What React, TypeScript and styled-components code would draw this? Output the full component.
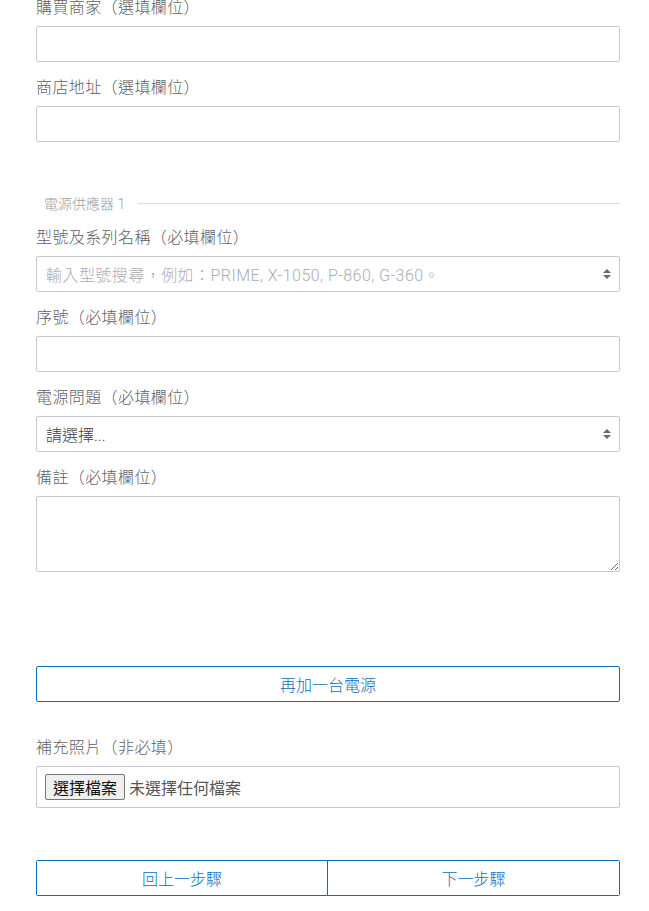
import React from 'react';
import styled, {createGlobalStyle} from 'styled-components';

const Global = createGlobalStyle`
  html, body { margin: 0; padding: 0; background: #fff; }
  body {
    font-family: Roboto, "Noto Sans CJK TC", "Noto Sans CJK SC", sans-serif;
    color: #555;
  }
  * { box-sizing: border-box; }
`

const Page = styled.div`
  width: 649px;
  height: 911px;
  overflow: hidden;
  padding: 0 29px 0 36px;
`
const Form = styled.form`
  display: flex;
  flex-direction: column;
  margin-top: -2px;
`
const Group = styled.div<{$gap?: number}>`
  display: flex;
  flex-direction: column;
  margin-bottom: ${p => p.$gap ?? 16}px;
`
const Label = styled.label`
  font-size: 16px;
  line-height: 20px;
  color: #5f6166;
  margin-bottom: 8px;
  font-weight: 300;
  letter-spacing: 0.4px;
`
const Field = styled.input`
  width: 584px;
  height: 36px;
  border: 1px solid #c7cad5;
  border-radius: 2px;
  padding: 0 9px;
  font: inherit;
  font-size: 16px;
  color: #333;
  background: #fff;
  outline: none;
`
const Area = styled.textarea`
  width: 584px;
  height: 76px;
  border: 1px solid #c7cad5;
  border-radius: 2px;
  padding: 6px 9px;
  font: inherit;
  font-size: 16px;
  background: #fff;
  outline: none;
  display: block;
`
const SelectBox = styled.div<{$muted?: boolean}>`
  position: relative;
  width: 584px;
  height: 36px;
  border: 1px solid #c7cad5;
  border-radius: 2px;
  padding: 0 9px;
  display: flex;
  align-items: center;
  font-size: 16px;
  font-weight: 300;
  color: ${p => (p.$muted ? '#a9acb5' : '#3e4046')};
  letter-spacing: ${p => (p.$muted ? '0.45px' : '0')};
`
const Arrows = styled.svg`
  position: absolute;
  right: 7px;
  top: 11px;
  width: 10px;
  height: 12px;
`
const Divider = styled.div`
  display: flex;
  align-items: center;
  height: 20px;
  margin: 51px 0 15px;
  padding-left: 8px;
  font-size: 14px;
  font-weight: 300;
  color: #9a9ca3;
  > span { padding-right: 13px; }
  &::after {
    content: '';
    flex: 1;
    height: 1px;
    background: #dcdde3;
  }
`
const OutlineBtn = styled.button`
  width: 584px;
  height: 36px;
  border: 1px solid #0a6ebd;
  border-radius: 2px;
  background: #fff;
  color: #0a6ebd;
  font: inherit;
  font-size: 16px;
  font-weight: 300;
  margin: 94px 0 36px;
`
const FileBox = styled.div`
  width: 584px;
  height: 42px;
  border: 1px solid #c7cad5;
  border-radius: 2px;
  display: flex;
  align-items: center;
  padding: 0 8px;
  gap: 4px;
  font-size: 16px;
  color: #555;
`
const FileBtn = styled.span`
  display: inline-flex;
  align-items: center;
  height: 26px;
  padding: 0 7px;
  background: #efefef;
  border: 1px solid #767676;
  border-radius: 2px;
  color: #111;
  font-size: 16px;
`
const StepBar = styled.div`
  display: grid;
  grid-template-columns: 1fr 1fr;
  width: 584px;
  height: 36px;
  margin-top: 52px;
  border: 1px solid #0a6ebd;
  border-radius: 2px;
`
const StepBtn = styled.button<{$left?: boolean}>`
  border: none;
  border-right: ${p => (p.$left ? '1px solid #0a6ebd' : 'none')};
  background: #fff;
  color: #0a6ebd;
  font: inherit;
  font-size: 16px;
  font-weight: 300;
`

function UpDown() {
  return (
    <Arrows viewBox="0 0 10 12">
      <path d="M1 5 L5 1 L9 5 Z" fill="#666b7a"/>
      <path d="M1 7 L5 11 L9 7 Z" fill="#666b7a"/>
    </Arrows>
  )
}

function App() {
  return (
    <Page>
      <Global/>
      <Form onSubmit={e => e.preventDefault()}>
        <Group>
          <Label>購買商家（選填欄位）</Label>
          <Field/>
        </Group>
        <Group $gap={0}>
          <Label>商店地址（選填欄位）</Label>
          <Field/>
        </Group>

        <Divider><span>電源供應器 1</span></Divider>

        <Group>
          <Label>型號及系列名稱（必填欄位）</Label>
          <SelectBox $muted>
            輸入型號搜尋，例如：PRIME, X-1050, P-860, G-360。
            <UpDown/>
          </SelectBox>
        </Group>
        <Group>
          <Label>序號（必填欄位）</Label>
          <Field/>
        </Group>
        <Group>
          <Label>電源問題（必填欄位）</Label>
          <SelectBox>
            請選擇...
            <UpDown/>
          </SelectBox>
        </Group>
        <Group $gap={0}>
          <Label>備註（必填欄位）</Label>
          <Area/>
        </Group>

        <OutlineBtn type="button">再加一台電源</OutlineBtn>

        <Group $gap={0}>
          <Label>補充照片（非必填）</Label>
          <FileBox>
            <FileBtn>選擇檔案</FileBtn>
            未選擇任何檔案
          </FileBox>
        </Group>

        <StepBar>
          <StepBtn type="button" $left>回上一步驟</StepBtn>
          <StepBtn type="button">下一步驟</StepBtn>
        </StepBar>
      </Form>
    </Page>
  );
}
export default App
